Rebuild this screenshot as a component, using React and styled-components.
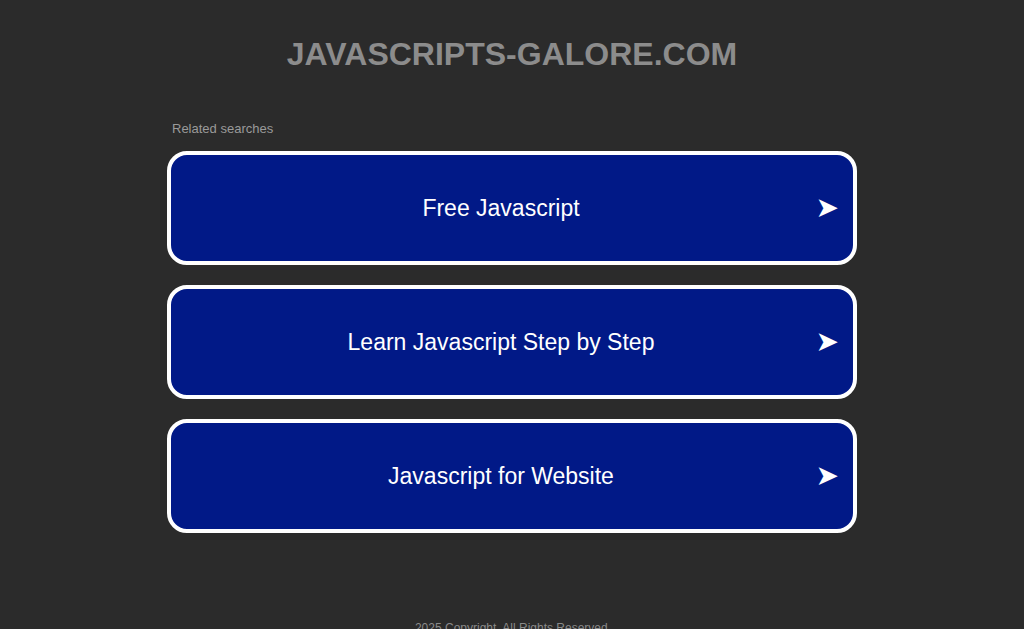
import React from "react";
import styled, { createGlobalStyle } from "styled-components";

const links = [
  "Free Javascript",
  "Learn Javascript Step by Step",
  "Javascript for Website",
];

function App() {
  return (
    <Page>
      <Global />
      <Title>JAVASCRIPTS-GALORE.COM</Title>
      <Searches>
        <Label>Related searches</Label>
        {links.map((text) => (
          <LinkBox key={text} href="#">
            <span>{text}</span>
            <Arrow>➤</Arrow>
          </LinkBox>
        ))}
      </Searches>
      <Footer>2025 Copyright. All Rights Reserved.</Footer>
    </Page>
  );
}

const Global = createGlobalStyle`
  body {
    margin: 0;
    background: #2b2b2b;
    font-family: "Liberation Sans", Arial, sans-serif;
    overflow: hidden;
  }
`;

const Page = styled.div`
  height: 629px;
  display: flex;
  flex-direction: column;
  align-items: center;
`;

const Title = styled.h1`
  margin: 35px 0 0;
  font-size: 32px;
  line-height: 38px;
  font-weight: bold;
  color: #8c8c8c;
`;

const Searches = styled.div`
  width: 690px;
  margin-top: 48px;
  display: flex;
  flex-direction: column;
  gap: 20px;
`;

const Label = styled.div`
  font-size: 13px;
  color: #9a9a9a;
  padding-left: 5px;
  margin-bottom: -6px;
  line-height: 16px;
`;

const LinkBox = styled.a`
  position: relative;
  box-sizing: border-box;
  height: 114px;
  border: 4px solid #fff;
  border-radius: 20px;
  background: #011987;
  display: flex;
  align-items: center;
  justify-content: center;
  color: #fff;
  font-size: 23px;
  text-decoration: none;
  padding-right: 22px;
`;

const Arrow = styled.span`
  position: absolute;
  right: 14px;
  top: calc(50% - 1px);
  transform: translateY(-50%);
  font-family: "DejaVu Sans", sans-serif;
  font-size: 28px;
  color: #fff;
`;

const Footer = styled.div`
  margin-top: auto;
  font-size: 12px;
  color: #8a8a8a;
  transform: translate(1px, 6px);
`;

export default App;
